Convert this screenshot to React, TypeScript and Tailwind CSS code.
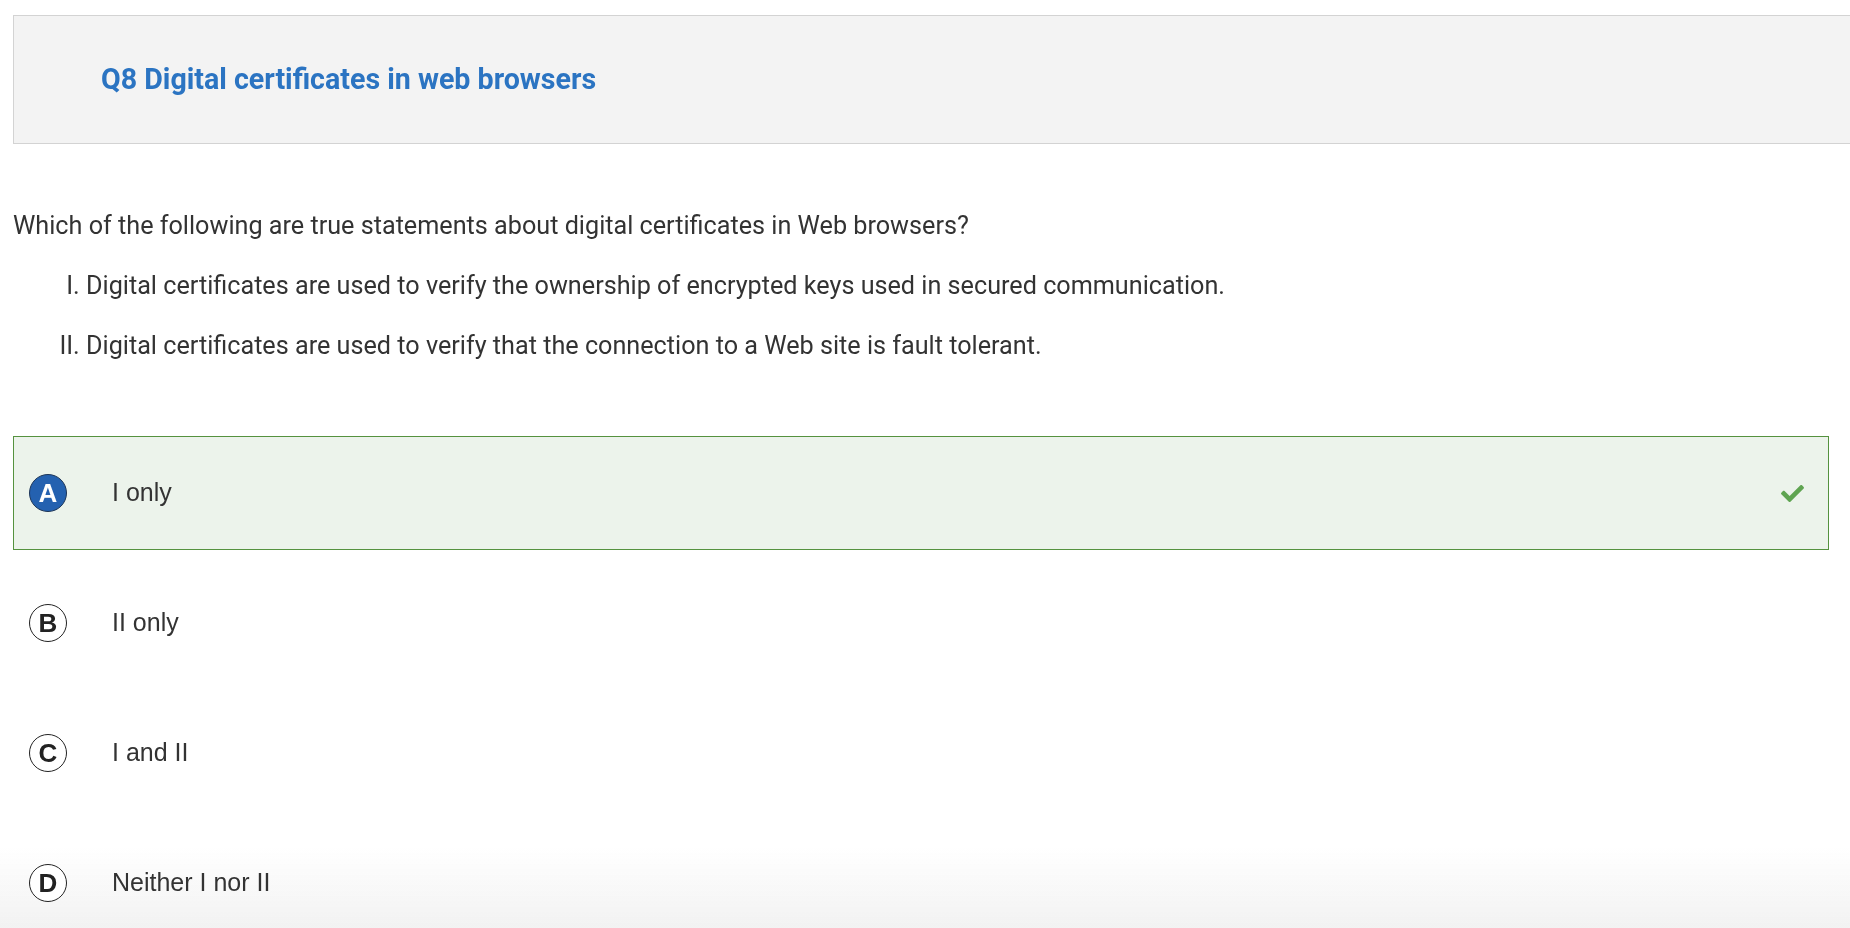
import { FaCheck } from "react-icons/fa";

const statements = [
  "Digital certificates are used to verify the ownership of encrypted keys used in secured communication.",
  "Digital certificates are used to verify that the connection to a Web site is fault tolerant.",
];

const options = [
  { letter: "A", text: "I only", correct: true },
  { letter: "B", text: "II only", correct: false },
  { letter: "C", text: "I and II", correct: false },
  { letter: "D", text: "Neither I nor II", correct: false },
];

export default function App() {
  return (
    <div className="min-h-screen bg-white font-['Roboto',sans-serif] text-[#333333]">
      <div className="pointer-events-none fixed inset-x-0 bottom-0 h-[80px] bg-linear-to-b from-white/0 to-[#f2f2f2]" />

      <div className="relative pl-[13px] pt-[15px]">
        <div className="flex h-[129px] items-center border border-r-0 border-[#d3d3d3] bg-[#f3f3f3] pl-[87px]">
          <h1 className="text-[28.6px] font-bold text-[#2b74c2]">
            Q8 Digital certificates in web browsers
          </h1>
        </div>

        <p className="mt-[67px] text-[25.2px] leading-[30px]">
          Which of the following are true statements about digital certificates in Web browsers?
        </p>
        <ol className="list-[upper-roman] pl-[73px] text-[25.2px] leading-[30px]">
          {statements.map((s) => (
            <li key={s} className="mt-[30px]">
              {s}
            </li>
          ))}
        </ol>

        <div className="mr-[21px] mt-[75px] flex flex-col gap-[16px]">
          {options.map((o) => (
            <div
              key={o.letter}
              className={
                o.correct
                  ? "flex h-[114px] items-center border border-[#55923f] bg-[#ecf3eb] pl-[15px] pr-[24px]"
                  : "flex h-[114px] items-center border border-transparent pl-[15px] pr-[24px]"
              }
            >
              <span
                className={
                  o.correct
                    ? "flex h-[38px] w-[38px] shrink-0 items-center justify-center rounded-full border border-[#1d3557] bg-[#2461b0] font-['Liberation_Sans',sans-serif] text-[26px] font-bold text-white"
                    : "flex h-[38px] w-[38px] shrink-0 items-center justify-center rounded-full border border-[#222] bg-white font-['Liberation_Sans',sans-serif] text-[26px] font-bold text-[#222]"
                }
              >
                {o.letter}
              </span>
              <span className="ml-[45px] flex-1 font-['Liberation_Sans',sans-serif] text-[25px] text-[#333333]">
                {o.text}
              </span>
              {o.correct && <FaCheck className="h-[23px] w-[23px] text-[#5fa451]" />}
            </div>
          ))}
        </div>
      </div>
    </div>
  );
}
